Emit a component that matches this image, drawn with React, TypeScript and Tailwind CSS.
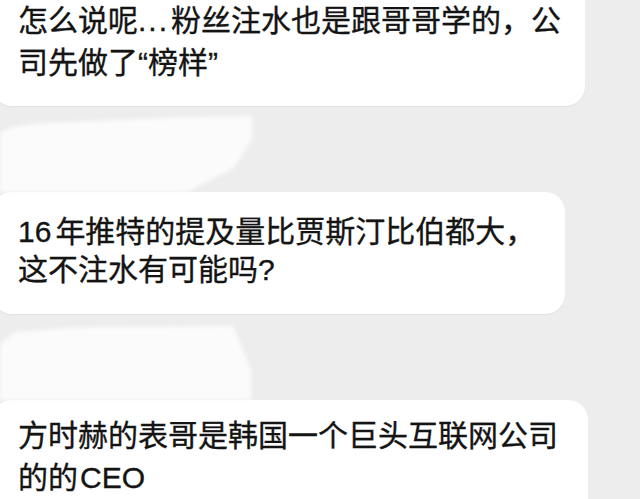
import React from "react";

const font = {
  fontFamily: '"Liberation Sans", "Noto Sans CJK SC", sans-serif',
};

export default function App() {
  return (
    <div
      className="w-[640px] h-[499px] overflow-hidden bg-[#ededed] text-[#141414] text-[30px] [-webkit-text-stroke:0.35px_#141414]"
      style={font}
    >
      <div className="flex flex-col">
        {/* Bubble 1 */}
        <div className="ml-[-8px] w-[593px] rounded-b-[20px] bg-white pl-[26px] pb-[22px] pt-0 leading-[42px] shadow-[0_1px_1px_rgba(0,0,0,0.05)]">
          怎么说呢<span className="tracking-[2px] mr-[2px]">...</span>粉丝注水也是跟哥哥学的，公
          <br />
          司先做了“榜样”
        </div>

        {/* Gap with smudge */}
        <div className="h-[86px] flex flex-col justify-end">
          <div className="h-[76px] w-[260px]">
            <div className="h-full w-full blur-[2px]">
              <div
                className="h-full w-full bg-[#fbfbfb]"
                style={{
                  clipPath:
                    "polygon(0 22%, 5% 14%, 15% 10%, 68% 2%, 97% 0, 97% 30%, 90% 68%, 72% 100%, 0 100%)",
                }}
              />
            </div>
          </div>
        </div>

        {/* Bubble 2 */}
        <div className="ml-[-8px] w-[573px] rounded-[20px] bg-white pl-[26px] pt-[21px] pb-[25px] leading-[38px] shadow-[0_1px_1px_rgba(0,0,0,0.05)]">
          <span className="mr-[4px]">16</span>年推特的提及量比贾斯汀比伯都大，
          <br />
          这不注水有可能吗?
        </div>

        {/* Gap with smudge */}
        <div className="h-[86px] flex flex-col justify-end">
          <div className="h-[74px] w-[256px]">
            <div className="h-full w-full blur-[2px]">
              <div
                className="h-full w-full bg-[#fbfbfb]"
                style={{
                  clipPath:
                    "polygon(0 25%, 6% 8%, 30% 2%, 91% 0, 94% 25%, 98% 60%, 98% 100%, 0 100%)",
                }}
              />
            </div>
          </div>
        </div>

        {/* Bubble 3 */}
        <div className="ml-[-8px] w-[596px] rounded-[20px] bg-white pl-[26px] pt-[15px] pb-[25px] leading-[42px]">
          方时赫的表哥是韩国一个巨头互联网公司
          <br />
          的的<span className="ml-[2px]">CEO</span>
        </div>
      </div>
    </div>
  );
}
